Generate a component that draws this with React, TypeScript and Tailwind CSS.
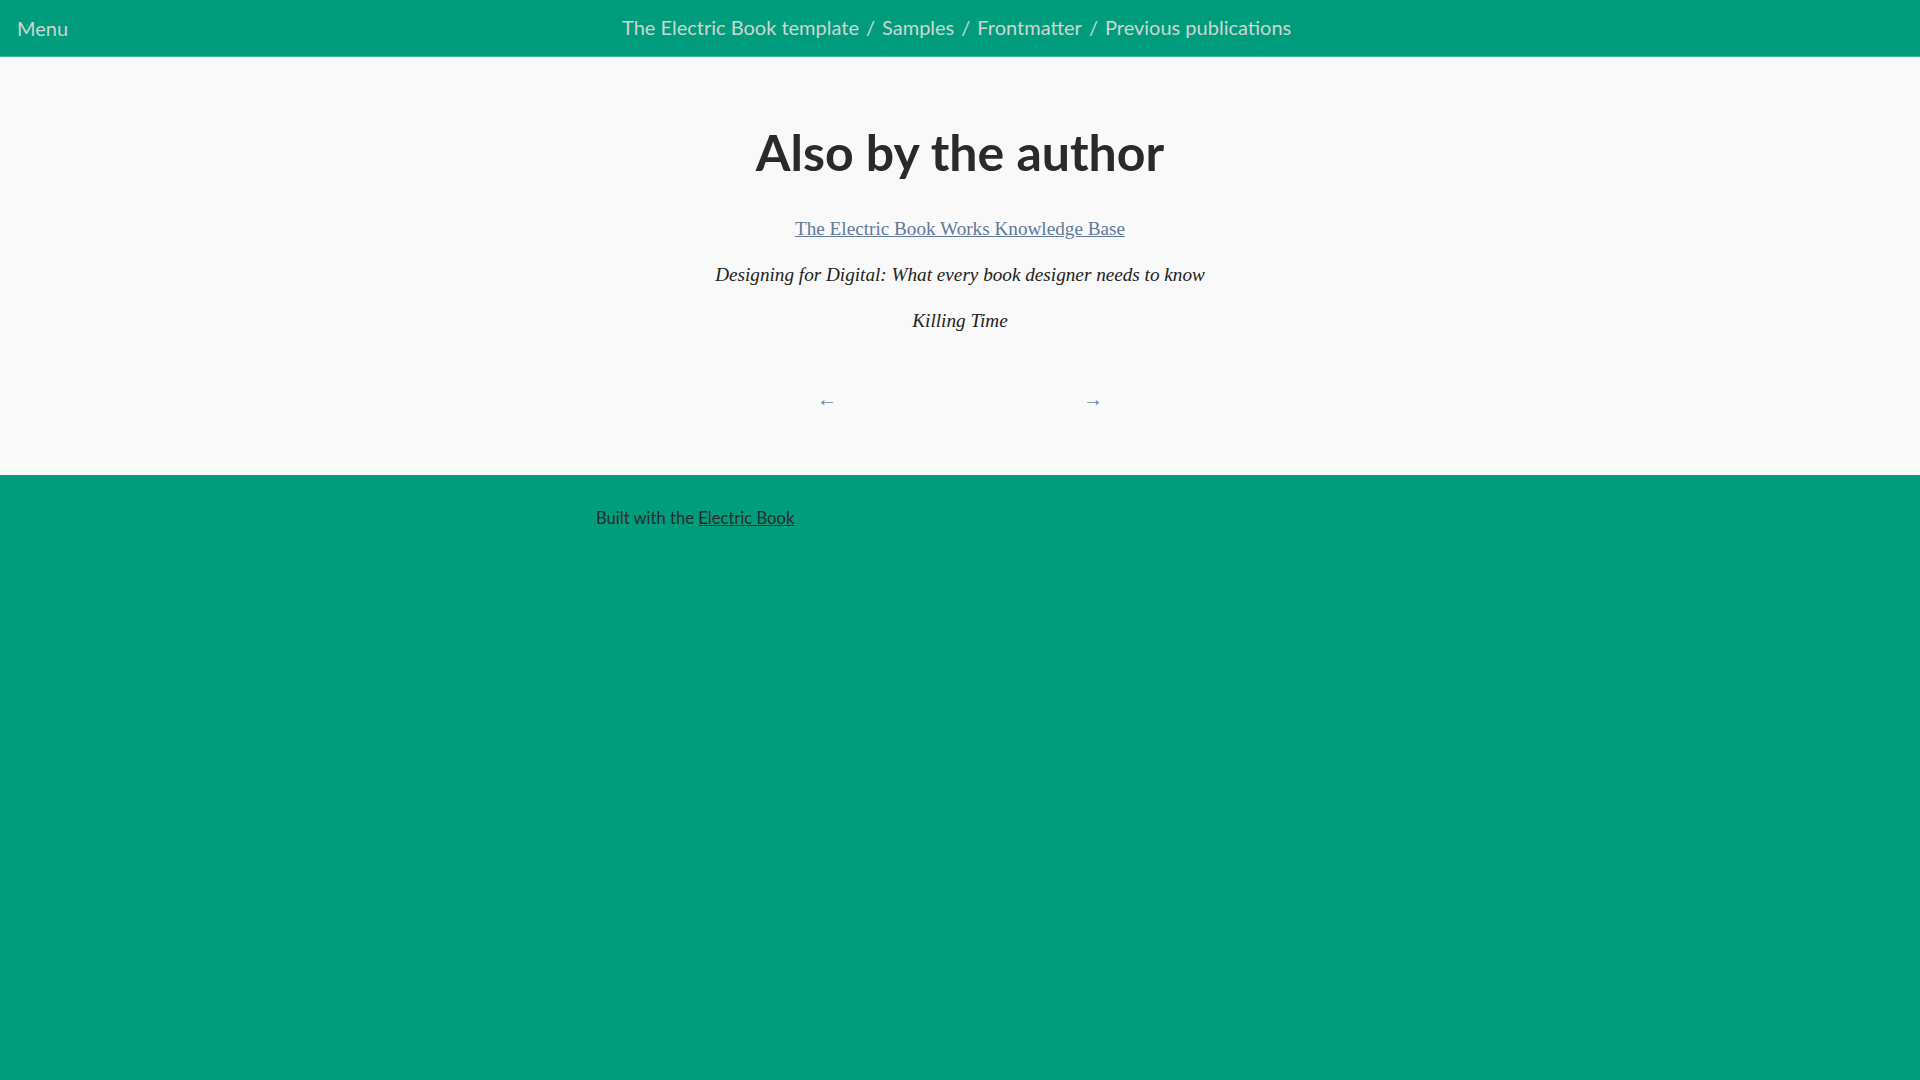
const crumbs = [
  "The Electric Book template",
  "Samples",
  "Frontmatter",
  "Previous publications",
];

export default function App() {
  return (
    <div className="min-h-screen bg-[#009d7c] font-['Lato','Noto_Sans',sans-serif]">
      <header className="grid h-[57px] grid-cols-[595px_1fr] items-center border-b border-[#3fb69b] text-[#cdd6d2]">
        <button className="justify-self-start pl-[17px] text-[20px]">Menu</button>
        <nav className="flex items-center gap-[7px] pb-[2px] pl-[27px] text-[20px]">
          {crumbs.map((c, i) => (
            <span key={c} className="flex items-center gap-[7px]">
              {i > 0 && <span>/</span>}
              <a>{c}</a>
            </span>
          ))}
        </nav>
      </header>

      <main className="bg-[#f9f9f9] pt-[65px] pb-[61px] text-center">
        <h1 className="text-[50px] font-bold leading-[1.2] text-[#2a2a2a]">
          Also by the author
        </h1>
        <div className="mt-[32px] flex flex-col gap-[16px] font-['Liberation_Serif',serif] text-[19.2px] leading-[30px] text-[#222]">
          <p>
            <a className="text-[#5f7a9b] underline">
              The Electric Book Works Knowledge Base
            </a>
          </p>
          <p className="italic">
            Designing for Digital: What every book designer needs to know
          </p>
          <p className="italic">Killing Time</p>
        </div>
        <div className="mt-[48px] flex justify-center gap-[246px] font-['Liberation_Serif',serif] text-[20px] leading-[30px] text-[#6a7f9f]">
          <a>←</a>
          <a>→</a>
        </div>
      </main>

      <footer className="grid grid-cols-[596px_1fr] pt-[30px] text-[16.6px] leading-[27px] text-[#2a2a2a]">
        <div />
        <p>
          Built with the <a className="underline">Electric Book</a>
        </p>
      </footer>
    </div>
  );
}
